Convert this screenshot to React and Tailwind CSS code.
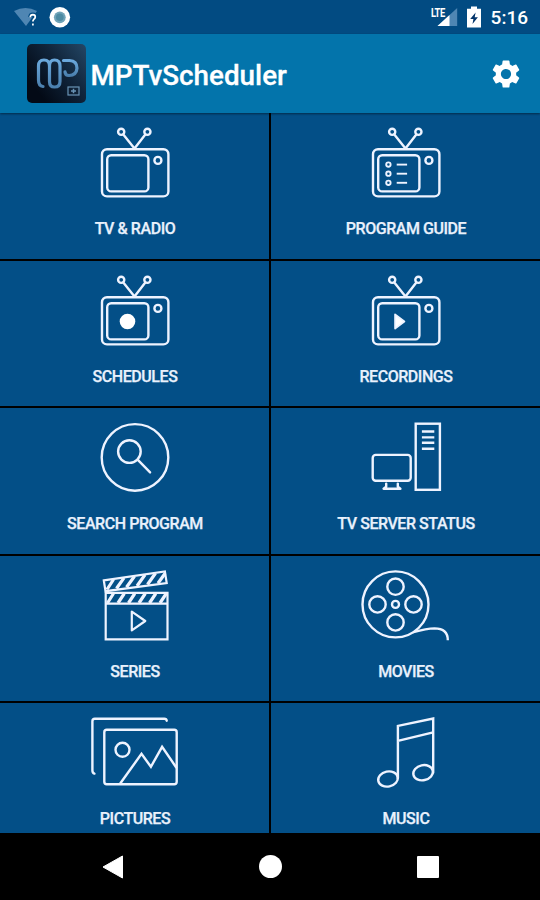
import { MdSettings } from "react-icons/md";

function TileIcon({ children, strokeWidth = 2.4 }) {
  return (
    <svg
      viewBox="0.5 0 100 80"
      className="h-20 w-[100px] shrink-0 overflow-visible"
      fill="none"
      stroke="#eef3ff"
      strokeWidth={strokeWidth}
      strokeLinejoin="round"
      strokeLinecap="round"
    >
      {children}
    </svg>
  );
}

function TvIcon({ children }) {
  return (
    <TileIcon>
      <circle cx="36.7" cy="8.8" r="3.1" />
      <circle cx="62.9" cy="8.8" r="3.1" />
      <path d="M38.8 11.4 50 25.6 60.8 11.4" />
      <rect x="17.5" y="26.2" width="66.4" height="47.2" rx="5" />
      <rect x="22.7" y="32.2" width="41.2" height="36.2" rx="4" />
      <circle cx="73.4" cy="37.4" r="3.5" />
      {children}
    </TileIcon>
  );
}

function GuideIcon() {
  return (
    <TvIcon>
      {[41.6, 50.7, 59.8].map((y) => (
        <g key={y} strokeWidth="1.9">
          <circle cx="32.9" cy={y} r="2.2" />
          <path d={`M41.2 ${y}H51.6`} strokeLinecap="butt" />
        </g>
      ))}
    </TvIcon>
  );
}

function SchedulesIcon() {
  return (
    <TvIcon>
      <circle cx="43" cy="50.5" r="7.8" fill="#fff" stroke="none" />
    </TvIcon>
  );
}

function RecordingsIcon() {
  return (
    <TvIcon>
      <path d="M39.6 43.4v14.2l9.3-7.1z" fill="#fff" strokeWidth="1.8" />
    </TvIcon>
  );
}

function SearchIcon() {
  return (
    <TileIcon>
      <circle cx="50.5" cy="39.4" r="33.3" />
      <circle cx="44.9" cy="33.6" r="11.3" />
      <path d="M53.1 41.7 65.6 54.4" />
    </TileIcon>
  );
}

function ServerIcon() {
  return (
    <TileIcon>
      <rect x="60.2" y="5.7" width="24.2" height="66.1" strokeLinejoin="miter" />
      <path d="M66.4 13.5h12.4M66.4 19.4h12.4M66.4 24.7h12.4M66.4 30.7h12.4" strokeLinecap="butt" />
      <rect x="17.2" y="36.9" width="38" height="25.8" rx="3" />
      <path d="M30.7 65.6v3.2l-2.6 2H44.9l-2.6-2v-3.2" />
    </TileIcon>
  );
}

function SeriesIcon() {
  return (
    <TileIcon strokeWidth={2.2}>
      <g strokeLinejoin="miter" strokeLinecap="butt">
        <path d="M19.3 14.4 80.4 5.4 82.2 17 21 25.2z" />
        <path d="M21.2 26.8H83V73.4H21.2zM21.2 37.7H83" />
        <path
          d="M22.5 23.5 29 13.5M32 22.5 39.5 11.8M42 21.3 50 10.2M52.5 20 60.5 8.8M63 18.5 71 7.3M73.5 17.3 80.5 7.5"
          strokeWidth="3.2"
        />
        <path
          d="M23 37 29 27.5M33.5 37 39.8 27.5M44 37 50.3 27.5M54.5 37 60.8 27.5M65 37 71.3 27.5M75.5 37 81.8 27.5"
          strokeWidth="3.2"
        />
      </g>
      <path d="M47.3 45.6v18.8L60.8 55z" />
    </TileIcon>
  );
}

function MoviesIcon() {
  return (
    <TileIcon>
      <circle cx="40" cy="38.4" r="33" />
      <circle cx="40" cy="20.7" r="8.2" />
      <circle cx="40" cy="56.4" r="8.2" />
      <circle cx="22" cy="38.4" r="8.2" />
      <circle cx="58" cy="38.4" r="8.2" />
      <circle cx="40" cy="38.4" r="3.5" />
      <path d="M57.6 66.3C66 64 71 62.6 79 62.4 88 62.4 92.3 66.5 92.3 74.2" strokeLinecap="butt" />
    </TileIcon>
  );
}

function PicturesIcon() {
  return (
    <TileIcon>
      <path d="M9.9 60.6Q7.9 60 7.9 57.5V8.3Q7.9 5.8 10.4 5.8H79.8Q82 5.8 82.2 7.7" />
      <rect x="19.8" y="16.7" width="72.4" height="54.6" rx="2.5" />
      <circle cx="38" cy="36.8" r="7" />
      <path d="M35.9 70.3 57 40.8 66.4 53.8 77.6 33.8 91.6 54.2" strokeLinejoin="miter" />
    </TileIcon>
  );
}

function MusicIcon() {
  return (
    <TileIcon>
      <path d="M42.4 65V12.9L77.7 5.5V59.5M42.4 27.9 77.7 19.4" strokeLinejoin="miter" />
      <ellipse cx="32.5" cy="66" rx="9.9" ry="7.5" transform="rotate(-12 32.5 66)" />
      <ellipse cx="67.6" cy="59.7" rx="9.9" ry="7.5" transform="rotate(-12 67.6 59.7)" />
    </TileIcon>
  );
}

const tiles = [
  { label: "TV & RADIO", Icon: TvIcon },
  { label: "PROGRAM GUIDE", Icon: GuideIcon },
  { label: "SCHEDULES", Icon: SchedulesIcon },
  { label: "RECORDINGS", Icon: RecordingsIcon },
  { label: "SEARCH PROGRAM", Icon: SearchIcon },
  { label: "TV SERVER STATUS", Icon: ServerIcon },
  { label: "SERIES", Icon: SeriesIcon },
  { label: "MOVIES", Icon: MoviesIcon },
  { label: "PICTURES", Icon: PicturesIcon },
  { label: "MUSIC", Icon: MusicIcon }
];

function StatusBar() {
  return (
    <div className="flex h-[34px] shrink-0 items-center bg-[#024b82] pl-[14px] pr-[12px]">
      <svg viewBox="0 0 24 20" className="h-5 w-6">
        <path d="M0 4Q11.5-2 23 4L12 19z" fill="#4f86b3" />
        <path
          d="M16.2 10.2Q16.4 7.6 18.9 7.6 21.3 7.7 21.3 9.9 21.2 11.4 19.8 12.3 18.9 13 18.9 14.6M18.9 16.5V18.4"
          fill="none"
          stroke="#024b82"
          strokeWidth="4"
        />
        <path
          d="M16.2 10.2Q16.4 7.6 18.9 7.6 21.3 7.7 21.3 9.9 21.2 11.4 19.8 12.3 18.9 13 18.9 14.6M18.9 16.5V18.4"
          fill="none"
          stroke="#fff"
          strokeWidth="1.7"
        />
      </svg>
      <svg viewBox="0 0 22 22" className="ml-[11px] h-[22px] w-[22px]">
        <circle cx="10.8" cy="11.3" r="10.3" fill="#fff" />
        <circle cx="10.8" cy="11.3" r="5.9" fill="#6fa3b8" />
        <circle cx="10.8" cy="11.3" r="3.8" fill="#4d8ba3" />
      </svg>
      <div className="ml-auto flex items-center">
        <div className="relative h-5 w-[26px]">
          <svg viewBox="0 0 26 20" className="h-5 w-[26px]">
            <path d="M25.2 1v18H5.500z" fill="#4f86b3" />
            <path d="M17.500 8V19H5.500z" fill="#fff" />
          </svg>
          <span className="absolute -left-px top-0 origin-left scale-x-[0.78] text-[12px] font-bold leading-[12px] tracking-[-0.6px]">
            LTE
          </span>
        </div>
        <svg viewBox="0 0 14 22" className="ml-[9px] h-[22px] w-[14px]">
          <path d="M4 .5h6v2.200h4V21.500H0V2.700h4z" fill="#fff" />
          <path d="M8.600 6.500 3.200 13H6.400L5.500 18 10.900 11.300H7.700z" fill="#03356b" />
        </svg>
        <span className="ml-[10px] pt-px text-[19px] font-medium leading-none">5:16</span>
      </div>
    </div>
  );
}

function AppLogo() {
  return (
    <svg viewBox="0 0 59 59" className="h-[59px] w-[59px]">
      <defs>
        <linearGradient id="tile" x1="1" y1="0" x2="0.1" y2="0.7">
          <stop offset="0" stopColor="#244766" />
          <stop offset="0.5" stopColor="#10243a" />
          <stop offset="1" stopColor="#030a16" />
        </linearGradient>
        <linearGradient id="mp" x1="0" y1="0" x2="0" y2="1">
          <stop offset="0" stopColor="#6aa8dc" />
          <stop offset="1" stopColor="#4b80ae" />
        </linearGradient>
      </defs>
      <rect width="59" height="59" rx="5" fill="url(#tile)" />
      <g fill="none" stroke="url(#mp)" strokeWidth="3.2" strokeLinecap="round">
        <path d="M16 42.500Q11.500 42 11.500 36V22Q11.500 16 17 16 22.500 16 22.500 22V37.500Q22.500 43 27.500 43 33 43 33 37.500V22Q33 16 27.500 16 22.500 16 22.500 22" />
        <path d="M36.500 16.500H42.500Q50 17 50 24.200 49.500 31.500 42 31.500 38.300 31.500 38 27.800" />
      </g>
      <rect x="41" y="43" width="11" height="8" fill="none" stroke="#6993b5" strokeWidth="1.2" />
      <path d="M44 47h5M46.500 44.800v4.400" stroke="#6993b5" strokeWidth="1.5" />
    </svg>
  );
}

function Header() {
  return (
    <header className="relative z-10 flex h-[79px] shrink-0 items-center bg-[#0374ab] pl-[27px] pr-[17px] shadow-[0_1px_2px_rgba(0,0,0,0.45)]">
      <AppLogo />
      <h1 className="ml-[4.5px] pt-[4px] text-[27.8px] font-medium leading-none [-webkit-text-stroke:0.3px_#fff]">
        MPTvScheduler
      </h1>
      <MdSettings className="ml-auto h-[34px] w-[34px]" />
    </header>
  );
}

function NavBar() {
  return (
    <nav className="flex h-[67px] shrink-0 items-center justify-between bg-black pl-[102px] pr-[101px]">
      <svg viewBox="0 0 22 24" className="h-6 w-[22px]">
        <path d="M20.5 1v22L1 12z" fill="#fff" stroke="#fff" strokeLinejoin="round" />
      </svg>
      <div className="h-[23px] w-[23px] rounded-full bg-white" />
      <div className="h-[22px] w-[22px] rounded-[1px] bg-white" />
    </nav>
  );
}

export default function App() {
  return (
    <div className="flex h-[900px] w-[540px] flex-col overflow-hidden bg-black font-[Roboto,sans-serif] text-white">
      <StatusBar />
      <Header />
      <main className="grid min-h-0 flex-1 auto-rows-[145.6px] grid-cols-2 gap-[2px] overflow-hidden">
        {tiles.map(({ label, Icon }) => (
          <div key={label} className="flex flex-col items-center bg-[#034f87] pt-[10px]">
            <Icon />
            <span className="mt-4 pl-px text-[16px] font-medium leading-5 tracking-[-0.45px] text-[#e9f1fc] [-webkit-text-stroke:0.25px_#e9f1fc]">
              {label}
            </span>
          </div>
        ))}
      </main>
      <NavBar />
    </div>
  );
}
